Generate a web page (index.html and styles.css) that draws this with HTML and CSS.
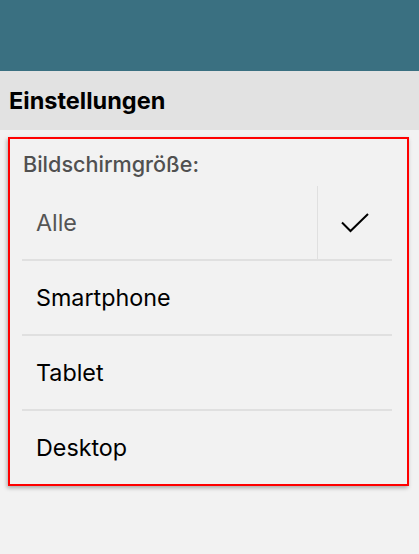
FILE: index.html
```html
<!DOCTYPE html>
<html lang="de">
<head>
<meta charset="utf-8">
<title>Einstellungen</title>
<link rel="stylesheet" href="styles.css">
</head>
<body>
<header class="appbar"></header>
<div class="titlebar"><h1 class="title">Einstellungen</h1></div>
<main class="content">
  <section class="panel">
    <div class="label">Bildschirmgröße:</div>
    <ul class="options">
      <li class="option selected">
        <span class="option-text">Alle</span>
        <span class="option-check">
          <svg width="28" height="20" viewBox="0 0 28 20"><path d="M1 9.5 L9.5 18 L27 1" fill="none" stroke="#000" stroke-width="2"/></svg>
        </span>
      </li>
      <li class="option"><span class="option-text">Smartphone</span></li>
      <li class="option"><span class="option-text">Tablet</span></li>
      <li class="option"><span class="option-text">Desktop</span></li>
    </ul>
  </section>
</main>
</body>
</html>
```
FILE: styles.css
```css
html, body {
  margin: 0;
  padding: 0;
}
body {
  background: #f2f2f2;
  font-family: Inter, "Noto Sans", sans-serif;
  color: #000;
  height: 554px;
}
.appbar {
  height: 71px;
  background: #3a7081;
}
.titlebar {
  height: 59px;
  background: #e2e2e2;
  display: flex;
  align-items: center;
  padding-left: 9px;
}
.title {
  margin: 0;
  font-size: 23.5px;
  font-weight: 700;
  line-height: 28px;
}
.content {
  padding: 7px 10px 0 8px;
}
.panel {
  border: 2px solid #ff0000;
  box-shadow: -1px 2px 4px rgba(0,0,0,0.3);
  padding: 12px 15px 0 12px;
}
.label {
  font-size: 21.6px;
  font-weight: 500;
  line-height: 27px;
  color: #505050;
  padding-left: 1px;
}
.options {
  list-style: none;
  margin: 8px 0 0 0;
  padding: 0;
}
.option {
  height: 73px;
  display: flex;
  align-items: center;
  border-bottom: 2px solid #e0e0e0;
  font-size: 23.3px;
}
.option:last-child {
  border-bottom: none;
}
.option-text {
  flex: 1;
  padding-left: 14px;
}
.selected .option-text {
  color: #555;
}
.option-check {
  width: 74px;
  height: 100%;
  border-left: 1px solid #e0e0e0;
  display: flex;
  align-items: center;
  justify-content: center;
}
```
